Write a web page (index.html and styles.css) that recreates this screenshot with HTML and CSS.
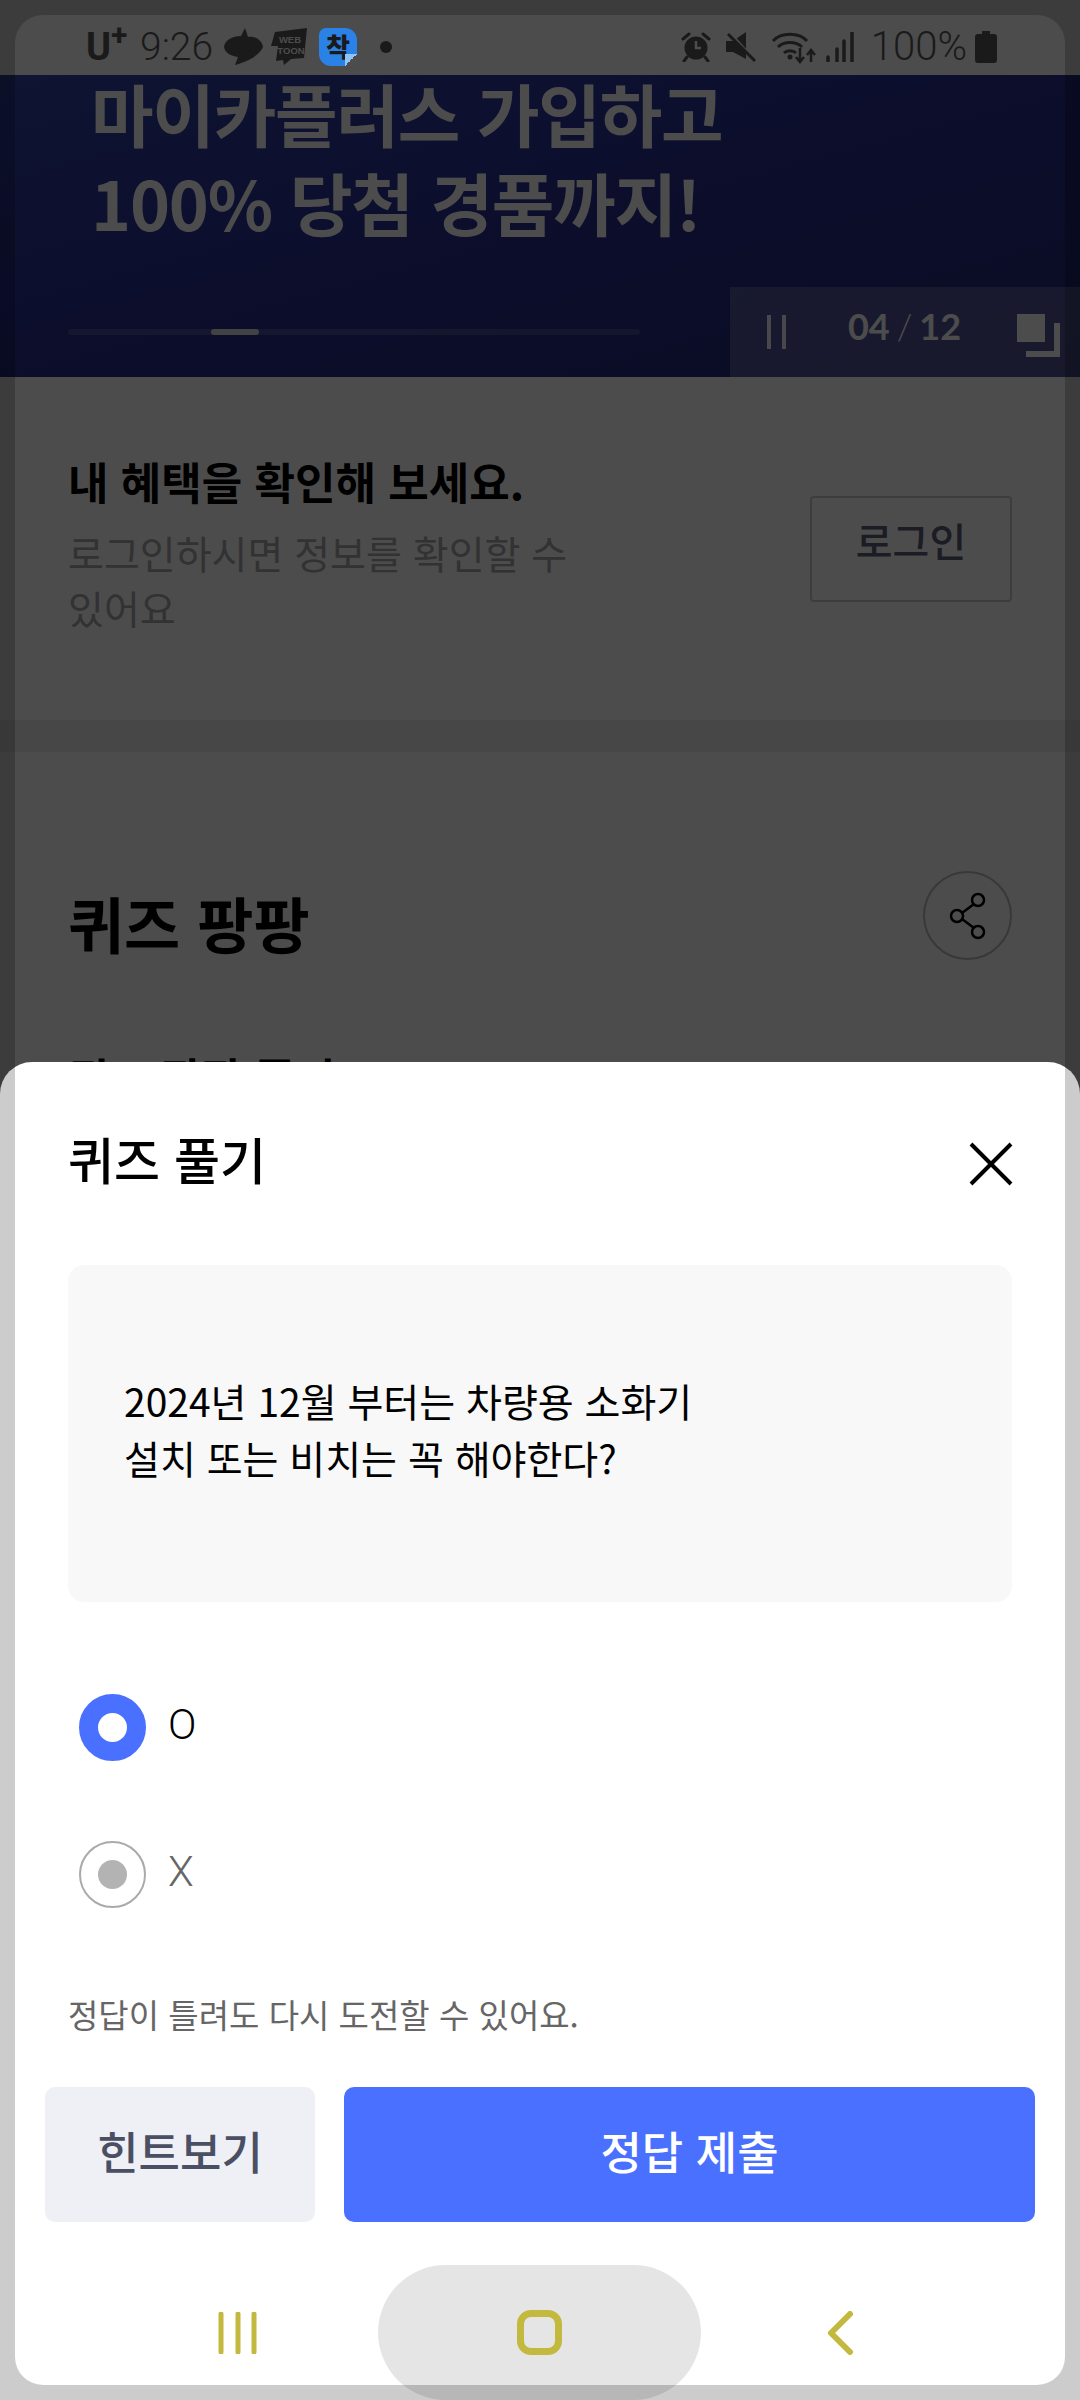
FILE: index.html
```html
<!DOCTYPE html>
<html lang="ko">
<head>
    <meta charset="UTF-8">
    <meta name="viewport" content="width=device-width, initial-scale=1.0">
    <title>퀴즈 풀기</title>
    <link rel="stylesheet" href="styles.css">
</head>
<body>
    <div class="statusbar">
        <div class="status-left">
            <span class="carrier"><span>U</span><span class="carrier-plus">+</span></span>
            <span class="clock">9:26</span>
            <svg class="ic-talk" width="40" height="38" viewBox="0 0 40 38"><path d="M21 0 L17 8 C8 8 1 12 0 19 C1 25 7 28 14 29 L11 37 C18 35 34 30 39 19 C38 12 31 8 24 9 Z" fill="#1a1a1a"/></svg>
            <svg class="ic-toon" width="40" height="38" viewBox="0 0 40 38"><path d="M4 4 L36 0 L33 30 L20 31 L13 37 L12 32 L5 33 L7 18 L0 18 Z" fill="#1a1a1a"/><text x="19" y="15" class="toon-text">WEB</text><text x="20" y="26" class="toon-text">TOON</text></svg>
            <span class="ic-blue">착</span>
            <span class="dot"></span>
        </div>
        <div class="status-right">
            <svg width="30" height="30" viewBox="0 0 30 30"><circle cx="15" cy="16" r="11.500" fill="#1a1a1a"/><path d="M15 9 V16 H20" stroke="#4d4d4d" stroke-width="2.500" fill="none"/><path d="M2 7 L8 2 M28 7 L22 2 M6 25 L3 29 M24 25 L27 29" stroke="#1a1a1a" stroke-width="3" stroke-linecap="round"/></svg>
            <svg width="31" height="30" viewBox="0 0 31 30"><path d="M0 9 H7 L20 0 V27 L7 20 H0 Z" fill="#1a1a1a"/><path d="M4 1 L28 28" stroke="#4d4d4d" stroke-width="3"/><path d="M2 2 L29 29" stroke="#1a1a1a" stroke-width="3"/></svg>
            <svg class="ic-wifi" width="46" height="34" viewBox="0 0 46 34"><path d="M2 11 C10 2 28 2 36 11 M7 17 C13 11 25 11 31 17 M13 23 C16 20 22 20 25 23" stroke="#1a1a1a" stroke-width="3" fill="none"/><circle cx="19" cy="27" r="2.500" fill="#1a1a1a"/><path d="M29 18 V31 M25 27 L29 32 L33 27 M40 32 V21 M36 25 L40 20 L44 25" stroke="#1a1a1a" stroke-width="2.500" fill="none"/></svg>
            <svg class="ic-signal" width="28" height="30" viewBox="0 0 28 30"><path d="M2 25 V29 M11 17 V29 M18 9 V29 M26 1 V29" stroke="#1a1a1a" stroke-width="3.500" stroke-linecap="round"/></svg>
            <span class="battery-text">100%</span>
            <svg class="ic-battery" width="22" height="32" viewBox="0 0 22 32"><path d="M7 0 H15 V3 H19 Q22 3 22 6 V29 Q22 32 19 32 H3 Q0 32 0 29 V6 Q0 3 3 3 H7 Z" fill="#1a1a1a"/></svg>
        </div>
    </div>

    <div class="banner">
        <h1 class="banner-title"><span>마이카플러스 가입하고</span><span>100% 당첨 경품까지!</span></h1>
        <div class="banner-bottom">
            <div class="progress"><div class="progress-thumb"></div></div>
            <div class="banner-ctrl">
                <span class="pause"></span>
                <span class="pager"><b>04</b><i>/</i><b>12</b></span>
                <span class="copy-icon"></span>
            </div>
        </div>
    </div>

    <div class="login-box">
        <div class="login-text">
            <h2>내 혜택을 확인해 보세요.</h2>
            <p>로그인하시면 정보를 확인할 수<br>있어요</p>
        </div>
        <div class="login-btn">로그인</div>
    </div>

    <div class="divider"></div>

    <div class="quiz-section">
        <div class="quiz-head">
            <h2>퀴즈 팡팡</h2>
            <div class="share-btn">
                <svg width="38" height="48" viewBox="0 0 38 48"><path d="M29 9 L9 24 L29 39" fill="none" stroke="#000" stroke-width="2.500"/><circle cx="29" cy="8" r="6" fill="#fff" stroke="#000" stroke-width="2.500"/><circle cx="8" cy="24" r="6" fill="#fff" stroke="#000" stroke-width="2.500"/><circle cx="29" cy="40" r="6" fill="#fff" stroke="#000" stroke-width="2.500"/></svg>
            </div>
        </div>
        <h3>퀴즈 팡팡 풀기</h3>
    </div>

    <div class="dim"></div>

    <div class="sheet">
        <div class="sheet-head">
            <h2>퀴즈 풀기</h2>
            <svg width="44" height="44" viewBox="0 0 44 44"><path d="M2 2 L42 42 M42 2 L2 42" stroke="#000" stroke-width="4"/></svg>
        </div>
        <div class="question">2024년 12월 부터는 차량용 소화기<br>설치 또는 비치는 꼭 해야한다?</div>
        <div class="options">
            <div class="option selected"><span class="radio"></span><span class="option-label">O</span></div>
            <div class="option"><span class="radio"></span><span class="option-label">X</span></div>
        </div>
        <p class="note">정답이 틀려도 다시 도전할 수 있어요.</p>
        <div class="actions">
            <div class="btn btn-hint">힌트보기</div>
            <div class="btn btn-submit">정답 제출</div>
        </div>
        <div class="navbar">
            <div class="nav-item">
                <svg width="40" height="42" viewBox="0 0 40 42"><path d="M3 2 V40 M20 2 V40 M36 2 V40" stroke="#c4b93f" stroke-width="5" stroke-linecap="round"/></svg>
            </div>
            <div class="nav-item nav-home">
                <span class="home-icon"></span>
            </div>
            <div class="nav-item">
                <svg width="28" height="44" viewBox="0 0 28 44"><path d="M24 3 L5 22 L24 41" fill="none" stroke="#c4b93f" stroke-width="6" stroke-linecap="round" stroke-linejoin="round"/></svg>
            </div>
        </div>
    </div>

    <div class="frame"><div class="frame-inner"></div></div>
</body>
</html>
```

FILE: styles.css
```css
/* General Styles */
* {
    box-sizing: border-box;
}

body {
    font-family: "Noto Sans CJK KR", "Noto Sans", sans-serif;
    margin: 0;
    width: 1080px;
    height: 2400px;
    position: relative;
    overflow: hidden;
    background: #fff;
    color: #000;
}

h1, h2, h3, p {
    margin: 0;
}

/* Status bar sits above the dim layer */
.statusbar {
    position: relative;
    z-index: 2;
    height: 75px;
    padding: 26px 83px 0 86px;
    display: flex;
    justify-content: space-between;
    align-items: flex-start;
    color: #1a1a1a;
    font-family: Roboto, "Noto Sans", sans-serif;
}

.status-left, .status-right {
    display: flex;
    align-items: center;
    height: 42px;
}

.carrier {
    font-size: 38px;
    font-weight: 700;
    line-height: 42px;
    width: 54px;
    display: flex;
}

.carrier-plus {
    font-size: 30px;
    line-height: 30px;
    height: 30px;
    margin-top: -6px;
}

.clock {
    font-size: 39px;
    font-weight: 300;
    width: 84px;
    line-height: 42px;
}

.ic-talk {
    margin-right: 7px;
}

.ic-toon {
    margin-right: 8px;
}

.toon-text {
    font-family: "Liberation Sans", sans-serif;
    font-size: 9.500px;
    font-weight: 700;
    fill: #4d4d4d;
    text-anchor: middle;
}

.ic-blue {
    width: 38px;
    height: 38px;
    position: relative;
    border-radius: 7px 12px 12px 12px;
    background: #2a82e6;
    color: #1a1a1a;
    font-family: "Noto Sans CJK KR", sans-serif;
    font-size: 26px;
    font-weight: 900;
    line-height: 36px;
    text-align: center;
}

.ic-blue::after {
    content: "";
    position: absolute;
    right: 0;
    bottom: 0;
    width: 12px;
    height: 12px;
    background: linear-gradient(135deg, #8fc4f7 50%, #4d4d4d 50%);
}

.dot {
    width: 12px;
    height: 12px;
    border-radius: 50%;
    background: #1a1a1a;
    margin-left: 23px;
}

.status-right svg {
    margin-left: 15px;
}

.status-right .ic-wifi {
    margin-left: 14px;
}

.status-right .ic-signal {
    margin-left: 9px;
}

.status-right svg:first-child, .status-right .ic-battery {
    margin-left: 0;
}

.battery-text {
    font-size: 40px;
    font-weight: 300;
    line-height: 42px;
    margin-left: 17px;
    margin-right: 8px;
}

/* Banner */
.banner {
    height: 302px;
    background: linear-gradient(165deg, #2f44a6 0%, #2a2f95 45%, #252a78 100%);
    color: #fff;
    display: flex;
    flex-direction: column;
    justify-content: space-between;
}

.banner-title {
    font-size: 68px;
    font-weight: 700;
    line-height: 74px;
    padding: 1px 0 0 91px;
    letter-spacing: -1.200px;
    display: flex;
    flex-direction: column;
    gap: 15px;
}

.banner-bottom {
    height: 90px;
    display: flex;
    justify-content: space-between;
    padding-left: 68px;
}

.progress {
    width: 572px;
    height: 6px;
    margin-top: 42px;
    border-radius: 3px;
    background: rgba(255, 255, 255, 0.15);
    padding-left: 143px;
}

.progress-thumb {
    width: 48px;
    height: 6px;
    border-radius: 3px;
    background: #ddd;
}

.banner-ctrl {
    width: 350px;
    background: rgba(255, 255, 255, 0.2);
    display: flex;
    align-items: flex-start;
    padding: 27px 26px 0 37px;
    justify-content: space-between;
}

.pause {
    width: 19px;
    height: 34px;
    margin-top: 1px;
    border-left: 4px solid #f0f0ff;
    border-right: 4px solid #f0f0ff;
}

.pager {
    font-family: Lato, sans-serif;
    font-size: 36px;
    line-height: 30px;
    display: flex;
    align-items: center;
    gap: 7px;
    margin: -3px 0 0 26px;
}

.pager i {
    font-style: normal;
    font-weight: 300;
}

.copy-icon {
    width: 37px;
    height: 37px;
    position: relative;
    margin-left: 20px;
}

.copy-icon::before {
    content: "";
    position: absolute;
    left: 0;
    top: 0;
    width: 28px;
    height: 28px;
    background: #fff;
}

.copy-icon::after {
    content: "";
    position: absolute;
    left: 9px;
    top: 9px;
    width: 28px;
    height: 28px;
    border-right: 6px solid #fff;
    border-bottom: 6px solid #fff;
}

/* Login box */
.login-box {
    height: 343px;
    padding: 74px 68px 0;
    display: flex;
    justify-content: space-between;
    align-items: flex-start;
}

.login-text h2 {
    font-size: 44px;
    font-weight: 700;
    line-height: 60px;
}

.login-text p {
    font-size: 39px;
    font-weight: 400;
    line-height: 55px;
    color: #a8a8a8;
    margin-top: 14px;
}

.login-btn {
    width: 202px;
    height: 106px;
    margin-top: 45px;
    border: 2px solid #ccc;
    border-radius: 4px;
    font-size: 40px;
    font-weight: 500;
    color: #60607a;
    display: flex;
    align-items: center;
    justify-content: center;
    padding-bottom: 18px;
    background: #fff;
}

.divider {
    height: 32px;
    background: #eee;
}

/* Quiz section */
.quiz-section {
    padding: 119px 68px 0;
}

.quiz-head {
    display: flex;
    justify-content: space-between;
    align-items: flex-start;
}

.quiz-head h2 {
    font-size: 61px;
    font-weight: 700;
    line-height: 80px;
    margin-top: 12px;
}

.share-btn {
    width: 89px;
    height: 89px;
    border: 2px solid #bbb;
    border-radius: 50%;
    display: flex;
    align-items: center;
    justify-content: center;
    background: #fff;
}

.quiz-section h3 {
    font-size: 44px;
    font-weight: 700;
    line-height: 60px;
    margin-top: 84px;
}

.dim {
    position: absolute;
    inset: 0;
    z-index: 1;
    background: rgba(0, 0, 0, 0.7);
}

/* Bottom sheet */
.sheet {
    position: absolute;
    left: 0;
    right: 0;
    top: 1062px;
    bottom: 0;
    z-index: 3;
    background: #fff;
    border-radius: 32px 32px 0 0;
    padding: 0 68px;
    overflow: hidden;
}

.sheet-head {
    display: flex;
    justify-content: space-between;
    align-items: center;
    height: 100px;
    margin-top: 50px;
}

.sheet-head h2 {
    font-size: 50px;
    font-weight: 500;
    margin-top: -8px;
}

.sheet-head svg {
    margin-top: 4px;
    margin-right: -1px;
}

.question {
    height: 337px;
    margin-top: 53px;
    background: #f8f8f8;
    border-radius: 16px;
    padding: 107px 56px 0;
    font-size: 39px;
    line-height: 57px;
}

.options {
    margin-top: 91px;
    padding-left: 11px;
    display: flex;
    flex-direction: column;
    gap: 79px;
}

.option {
    display: flex;
    align-items: center;
    gap: 22px;
    height: 68px;
}

.radio {
    width: 67px;
    height: 67px;
    border-radius: 50%;
    border: 2px solid #aaa;
    position: relative;
    flex: none;
}

.radio::after {
    content: "";
    position: absolute;
    left: 17px;
    top: 17px;
    width: 29px;
    height: 29px;
    border-radius: 50%;
    background: #b3b3b3;
}

.selected .radio {
    background: #4a70ff;
    border-color: #4a70ff;
}

.selected .radio::after {
    background: #fff;
}

.option-label {
    font-family: Roboto, sans-serif;
    font-size: 42px;
    font-weight: 300;
    color: #666;
    margin-top: -6px;
}

.selected .option-label {
    color: #000;
}

.note {
    margin-top: 81px;
    font-size: 33px;
    font-weight: 400;
    line-height: 50px;
    color: #666;
}

.actions {
    display: flex;
    gap: 29px;
    margin: 48px -23px 0;
}

.btn {
    height: 135px;
    border-radius: 10px;
    display: flex;
    align-items: center;
    justify-content: center;
    font-size: 45px;
    font-weight: 500;
    padding-bottom: 8px;
}

.btn-hint {
    width: 270px;
    background: #eff0f5;
    color: #4a4f63;
}

.btn-submit {
    flex: 1;
    background: #4a70ff;
    color: #fff;
}

/* Android nav */
.navbar {
    display: flex;
    justify-content: center;
    margin: 43px -68px 0;
    padding-right: 2px;
    height: 135px;
}

.nav-item {
    display: flex;
    align-items: center;
    justify-content: center;
    width: 301px;
    height: 135px;
}

.nav-home {
    position: relative;
}

.nav-home::before {
    content: "";
    position: absolute;
    left: -11px;
    right: -11px;
    top: 0;
    bottom: 0;
    background: rgba(0, 0, 0, 0.1);
    border-radius: 68px;
}

.home-icon {
    width: 45px;
    height: 45px;
    border: 7px solid #c4b93f;
    border-radius: 14px;
    position: relative;
}

/* Darkened bezel over everything */
.frame {
    position: absolute;
    inset: 0;
    z-index: 5;
    overflow: hidden;
    pointer-events: none;
}

.frame-inner {
    position: absolute;
    inset: 15px;
    border-radius: 28px;
    box-shadow: 0 0 0 40px rgba(0, 0, 0, 0.2);
}
```
